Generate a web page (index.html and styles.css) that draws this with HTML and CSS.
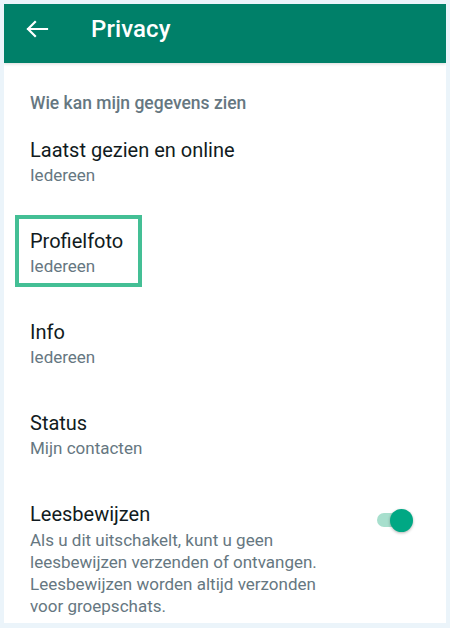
FILE: index.html
```html
<!DOCTYPE html>
<html lang="nl">

<head>
  <meta charset="UTF-8">
  <meta name="viewport" content="width=device-width, initial-scale=1.0">
  <title>Privacy</title>
  <link rel="stylesheet" href="styles.css">
</head>

<body>
  <div class="screen">
    <!-- Top bar -->
    <header class="appbar">
      <svg class="back" width="24" height="18" viewBox="0 0 24 18">
        <path d="M22 9H3 M10 2L3 9l7 7" stroke="#fff" stroke-width="2.2" fill="none" stroke-linecap="square" />
      </svg>
      <h1 class="title">Privacy</h1>
    </header>

    <div class="content">
      <div class="group-label">Wie kan mijn gegevens zien</div>

      <div class="item">
        <div class="item-title">Laatst gezien en online</div>
        <div class="item-sub">Iedereen</div>
      </div>

      <div class="item">
        <div class="focus">
          <div class="item-title">Profielfoto</div>
          <div class="item-sub">Iedereen</div>
        </div>
      </div>

      <div class="item">
        <div class="item-title">Info</div>
        <div class="item-sub">Iedereen</div>
      </div>

      <div class="item">
        <div class="item-title">Status</div>
        <div class="item-sub">Mijn contacten</div>
      </div>

      <div class="item item-switch">
        <div class="item-text">
          <div class="item-title">Leesbewijzen</div>
          <div class="item-desc">Als u dit uitschakelt, kunt u geen leesbewijzen verzenden of ontvangen. Leesbewijzen worden altijd verzonden voor groepschats.</div>
        </div>
        <div class="switch">
          <span class="track"></span>
          <span class="knob"></span>
        </div>
      </div>
    </div>
  </div>
</body>

</html>
```

FILE: styles.css
```css
body {
  margin: 0;
  background: #ebf4fa;
  font-family: Roboto, "Noto Sans", Arial, sans-serif;
}

.screen {
  margin: 4px;
  width: 442px;
  height: 619px;
  background: #fff;
  overflow: hidden;
}

.appbar {
  height: 50px;
  padding-bottom: 9px;
  background: #008069;
  display: flex;
  align-items: center;
  box-shadow: 0 1px 3px rgba(0, 0, 0, 0.15);
}

.back {
  margin-left: 21px;
  display: block;
}

.title {
  margin: 0 0 0 42px;
  color: #fff;
  font-size: 24px;
  font-weight: 500;
  letter-spacing: 0.1px;
}

.content {
  padding: 28px 0 0 26px;
}

.group-label {
  font-size: 17.5px;
  font-weight: 500;
  line-height: 24px;
  color: #667781;
  margin-bottom: 2px;
}

.item {
  padding: 20px 0 21px;
}

.item-title {
  font-size: 20px;
  line-height: 26px;
  color: #111b21;
}

.item-sub {
  font-size: 17px;
  line-height: 24px;
  color: #667781;
}

/* highlighted row */
.focus {
  display: inline-block;
  border: 4px solid #44bf95;
  padding: 9px 15px 5px 11px;
  margin: -13px 0 -9px -15px;
}

.item-switch {
  display: flex;
  align-items: flex-start;
  padding-right: 30px;
}

.item-text {
  flex: 1;
}

.item-desc {
  margin-top: 2px;
  font-size: 17px;
  line-height: 22px;
  color: #667781;
  width: 310px;
}

.switch {
  position: relative;
  width: 42px;
  height: 24px;
  margin-top: 7px;
}

.track {
  position: absolute;
  left: 3px;
  top: 5px;
  width: 34px;
  height: 14px;
  border-radius: 7px;
  background: #a7dfcd;
}

.knob {
  position: absolute;
  left: 16px;
  top: 1px;
  width: 23px;
  height: 23px;
  border-radius: 50%;
  background: #00a884;
  box-shadow: 0 1px 3px rgba(0, 0, 0, 0.3);
}
```
